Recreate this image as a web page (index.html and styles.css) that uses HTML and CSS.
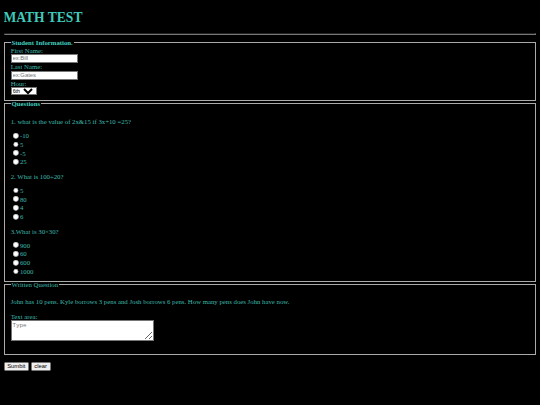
FILE: index.html
```html
<!DOCTYPE html>
<html>
<head>
<meta charset="utf-8">
<title>Math Test</title>
<link rel="stylesheet" href="styles.css">
</head>
<body>
<h1 class="title">MATH TEST</h1>
<hr class="rule">
<form class="test">
  <fieldset class="box info">
    <legend class="legend-bold">Student Information.</legend>
    <label class="lbl">First Name:</label><br>
    <input class="field" type="text" placeholder="ex:Bill"><br>
    <label class="lbl">Last Name:</label><br>
    <input class="field" type="text" placeholder="ex:Gates"><br>
    <label class="lbl">Hour:</label><br>
    <select class="hour"><option>6th</option></select>
  </fieldset>
  <fieldset class="box questions">
    <legend class="legend-bold">Questions</legend>
    <p class="q">1. what is the value of 2x&amp;15 if 3x+10 =25?</p>
    <input type="radio" name="q1"><span class="opt">-10</span><br>
    <input type="radio" name="q1"><span class="opt">5</span><br>
    <input type="radio" name="q1"><span class="opt">-5</span><br>
    <input type="radio" name="q1"><span class="opt">25</span><br>
    <p class="q">2. What is 100÷20?</p>
    <input type="radio" name="q2"><span class="opt">5</span><br>
    <input type="radio" name="q2"><span class="opt">80</span><br>
    <input type="radio" name="q2"><span class="opt">4</span><br>
    <input type="radio" name="q2"><span class="opt">6</span><br>
    <p class="q">3.What is 30×30?</p>
    <input type="radio" name="q3"><span class="opt">900</span><br>
    <input type="radio" name="q3"><span class="opt">60</span><br>
    <input type="radio" name="q3"><span class="opt">600</span><br>
    <input type="radio" name="q3"><span class="opt">1000</span><br>
  </fieldset>
  <fieldset class="box written">
    <legend class="legend">Written Question</legend>
    <p class="prompt">John has 10 pens. Kyle borrows 3 pens and Josh borrows 6 pens. How many pens does John have now.</p>
    <label class="lbl">Text area:</label><br>
    <textarea class="answer" placeholder="Type"></textarea>
    <br><br>
  </fieldset>
  <br>
  <input class="btn" type="submit" value="Sumbit">
  <input class="btn" type="reset" value="clear">
</form>
</body>
</html>
```
FILE: styles.css
```css
html {
  zoom: 0.44;
  background: #000;
}
body {
  background: #000;
  color: #3fb8ab;
  font-family: "Liberation Serif", serif;
  font-size: 15.4px;
}
.title {
  color: #3ecbbb;
  font-size: 2em;
  margin: 14px 0 16px;
}
.rule {
  border: 1px inset #777;
  margin: 8px 0 10px;
}
.box {
  border: 2px groove #aaa;
  margin: 0 2px;
  padding: 1px 12px 10px;
}
.questions {
  margin-top: -2px;
  padding-top: 9px;
  padding-bottom: 11px;
}
.written {
  margin-top: -2px;
  padding-top: 8px;
  padding-bottom: 11px;
}
.legend-bold {
  font-weight: bold;
  color: #40d0c0;
}
.legend {
  color: #3fb8ab;
}
.lbl,
.q,
.prompt,
.opt {
  color: #3fb8ab;
}
.q {
  margin: 15.4px 0 13.4px;
}
.prompt {
  margin: 15.4px 0 17.6px;
}
input[type="radio"] {
  margin: 4px 3px 3px 5px;
}
.field {
  font-family: "Liberation Sans", sans-serif;
  width: 152px;
  box-sizing: border-box;
  margin: 1px 0;
}
.hour {
  font-family: "Liberation Sans", sans-serif;
  font-size: 12px;
  margin: 1px 0;
}
.answer {
  font-family: "Liberation Mono", monospace;
  width: 326px;
  height: 48px;
  box-sizing: border-box;
  margin-top: 0;
}
.btn {
  font-family: "Liberation Sans", sans-serif;
}
```
